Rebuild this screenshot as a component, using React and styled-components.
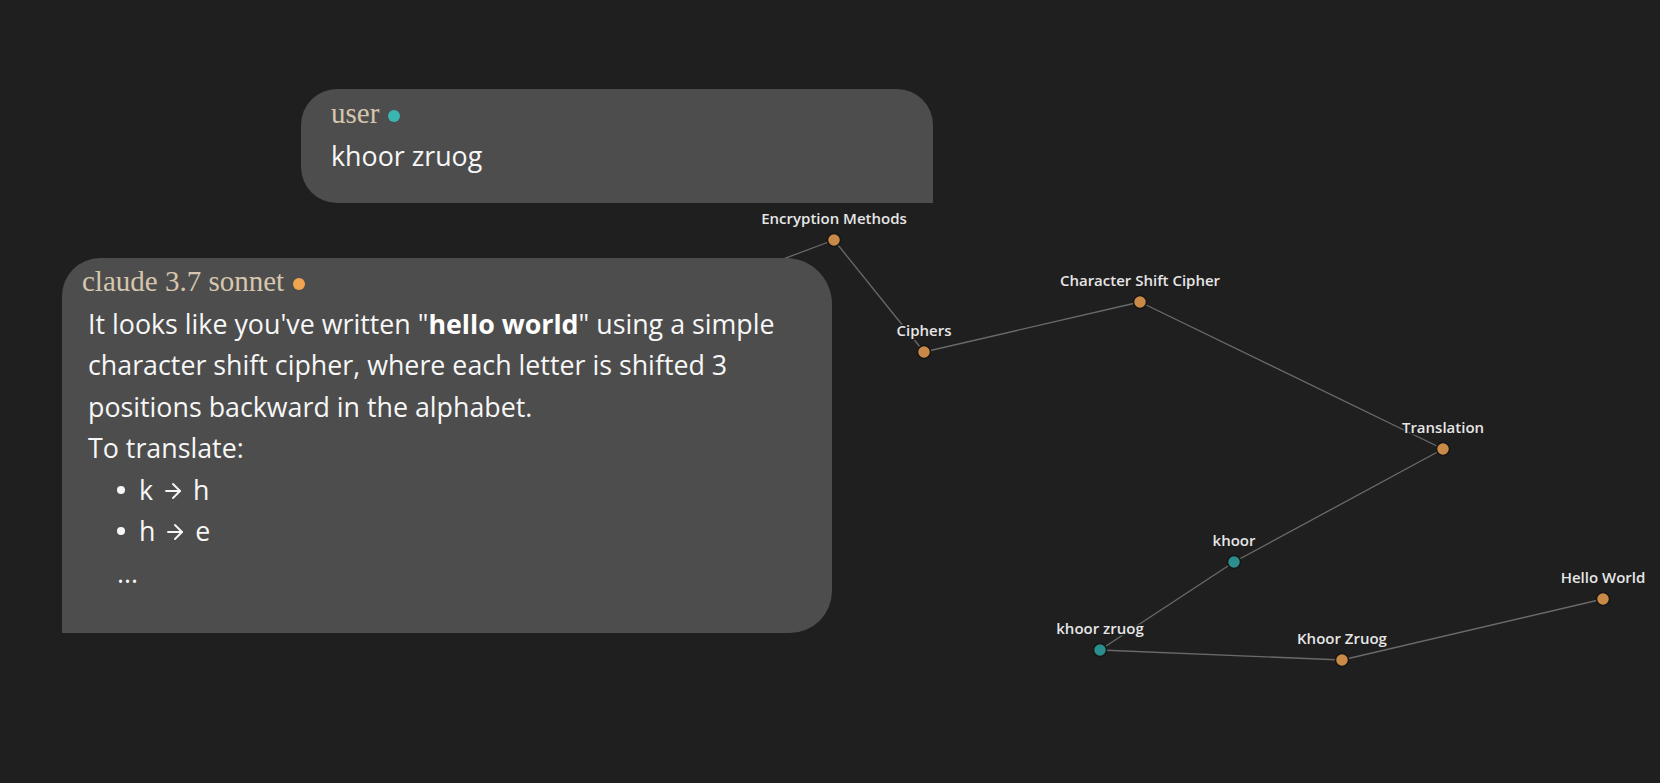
import React from 'react';
import styled, { createGlobalStyle } from 'styled-components';
import { ArrowRight } from 'lucide-react';

const GlobalStyle = createGlobalStyle`
  html, body {
    margin: 0;
    padding: 0;
    background: #1f1f1f;
  }
  #root {
    width: 1660px;
    height: 783px;
  }
`;

const nodes = [
  { id: 'hidden', x: 700, y: 290, label: '', color: 'orange' },
  { id: 'enc', x: 834, y: 240, label: 'Encryption Methods', color: 'orange' },
  { id: 'ciph', x: 924, y: 352, label: 'Ciphers', color: 'orange' },
  { id: 'csc', x: 1140, y: 302, label: 'Character Shift Cipher', color: 'orange' },
  { id: 'tr', x: 1443, y: 449, label: 'Translation', color: 'orange' },
  { id: 'kh', x: 1234, y: 562, label: 'khoor', color: 'teal' },
  { id: 'kz', x: 1100, y: 650, label: 'khoor zruog', color: 'teal' },
  { id: 'KZ', x: 1342, y: 660, label: 'Khoor Zruog', color: 'orange' },
  { id: 'hw', x: 1603, y: 599, label: 'Hello World', color: 'orange' },
];

const edges = [
  ['hidden', 'enc'],
  ['enc', 'ciph'],
  ['ciph', 'csc'],
  ['csc', 'tr'],
  ['tr', 'kh'],
  ['kh', 'kz'],
  ['kz', 'KZ'],
  ['KZ', 'hw'],
];

const fills = { orange: '#c98a47', teal: '#2b8d8c' };

const byId = Object.fromEntries(nodes.map((n) => [n.id, n]));

export default function App() {
  return (
    <>
      <GlobalStyle />
      <Screen>
        <Graph width="1660" height="783">
          {edges.map(([a, b]) => (
            <Edge
              key={a + b}
              x1={byId[a].x}
              y1={byId[a].y}
              x2={byId[b].x}
              y2={byId[b].y}
            />
          ))}
          {nodes.map((n) => (
            <g key={n.id}>
              <Dot cx={n.x} cy={n.y} r="6.5" fill={fills[n.color]} />
              {n.label && (
                <NodeLabel x={n.x} y={n.y - 16} textAnchor="middle">
                  {n.label}
                </NodeLabel>
              )}
            </g>
          ))}
        </Graph>

        <Chat>
          <UserBubble>
            <Speaker>
              user <Status $color="#3bb5b1" />
            </Speaker>
            <Body>khoor zruog</Body>
          </UserBubble>

          <ModelBubble>
            <Speaker $indent>
              claude 3.7 sonnet <Status $color="#f2a54f" />
            </Speaker>
            <Body>
              It looks like you've written "<b>hello world</b>" using a simple
              <br />
              character shift cipher, where each letter is shifted 3
              <br />
              positions backward in the alphabet.
            </Body>
            <Body>To translate:</Body>
            <Steps>
              <Step>k <Arrow size={24} strokeWidth={1.9} /> h</Step>
              <Step>h <Arrow size={24} strokeWidth={1.9} /> e</Step>
              <Step $plain>...</Step>
            </Steps>
          </ModelBubble>
        </Chat>
      </Screen>
    </>
  );
}

const Screen = styled.main`
  position: relative;
  width: 1660px;
  height: 783px;
  overflow: hidden;
  background: #1f1f1f;
`;

const Graph = styled.svg`
  position: absolute;
  inset: 0;
`;

const Edge = styled.line`
  stroke: #6a6a6a;
  stroke-width: 1.3;
`;

const Dot = styled.circle`
  stroke: #161616;
  stroke-width: 1.5;
`;

const NodeLabel = styled.text`
  font-family: 'Open Sans', 'Liberation Sans', sans-serif;
  font-weight: 600;
  font-size: 15px;
  fill: #e6e6e6;
  paint-order: stroke;
  stroke: #1f1f1f;
  stroke-width: 3px;
`;

const Chat = styled.section`
  position: relative;
  display: flex;
  flex-direction: column;
  align-items: flex-start;
  gap: 55px;
  padding-top: 89px;
`;

const Bubble = styled.div`
  background: #4d4d4d;
  box-sizing: border-box;
  color: #f7f7f7;
  font-family: 'Open Sans', 'Liberation Sans', sans-serif;
  font-size: 26.8px;
  line-height: 41.5px;
`;

const UserBubble = styled(Bubble)`
  margin-left: 301px;
  width: 632px;
  height: 114px;
  padding: 4px 30px 0;
  border-radius: 36px 36px 0 36px;
`;

const ModelBubble = styled(Bubble)`
  margin-left: 62px;
  width: 770px;
  height: 375px;
  padding: 3px 26px 0;
  border-radius: 38px 46px 42px 0;
`;

const Speaker = styled.div`
  display: flex;
  align-items: center;
  gap: 9px;
  margin-left: ${(p) => (p.$indent ? '-6px' : '0')};
  font-family: 'Liberation Serif', 'Times New Roman', serif;
  font-size: 29px;
  color: #d6c6ad;
`;

const Status = styled.span`
  display: inline-block;
  width: 12px;
  height: 12px;
  margin-top: 4px;
  border-radius: 50%;
  background: ${(p) => p.$color};
`;

const Body = styled.div`
  white-space: nowrap;

  b {
    font-weight: 700;
    color: #ffffff;
  }
`;

const Arrow = styled(ArrowRight)`
  vertical-align: -3px;
  margin: 0 1px;
`;

const Steps = styled.ul`
  margin: 0;
  padding: 0 0 0 51px;
  list-style: none;
`;

const Step = styled.li`
  position: relative;
  margin-left: ${(p) => (p.$plain ? '-22px' : '0')};

  &::before {
    content: ${(p) => (p.$plain ? 'none' : "''")};
    position: absolute;
    left: -22px;
    top: 17px;
    width: 8px;
    height: 8px;
    border-radius: 50%;
    background: #f7f7f7;
  }
`;
